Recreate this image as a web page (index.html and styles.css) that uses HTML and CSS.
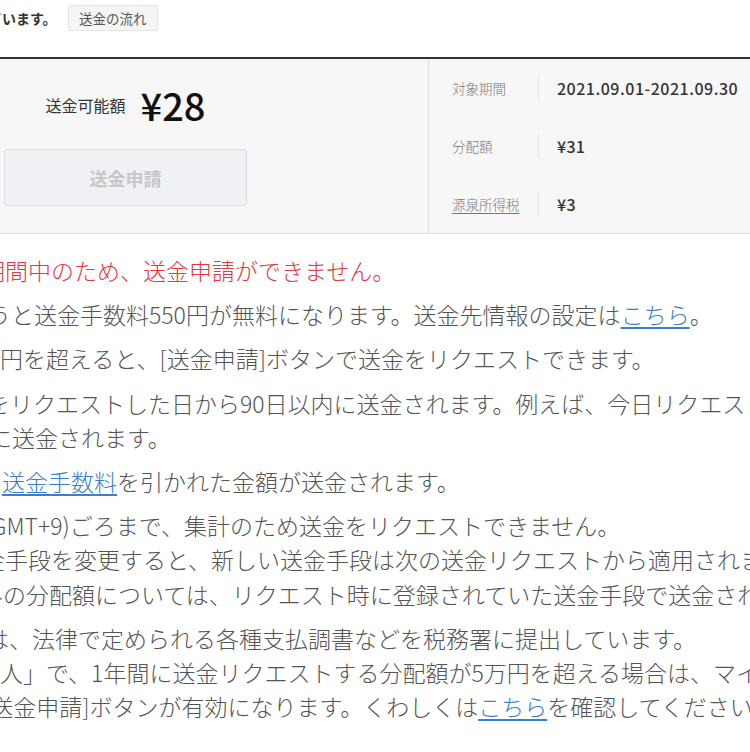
FILE: index.html
```
<!DOCTYPE html>
<html lang="ja">
<head>
<meta charset="utf-8">
<title>送金</title>
<link rel="stylesheet" href="styles.css">
</head>
<body>
<div class="top">
  <span class="lead">ています。</span>
  <span class="flow-btn">送金の流れ</span>
</div>
<div class="rule"></div>
<section class="panel">
  <div class="left">
    <div class="left-inner">
      <div class="avail">
        <span class="avail-label">送金可能額</span>
        <span class="avail-amount">¥28</span>
      </div>
      <button class="req-btn" disabled>送金申請</button>
    </div>
  </div>
  <div class="right">
    <div class="info-row">
      <span class="info-label">対象期間</span>
      <span class="sep"></span>
      <span class="info-value period">2021.09.01-2021.09.30</span>
    </div>
    <div class="info-row">
      <span class="info-label">分配額</span>
      <span class="sep"></span>
      <span class="info-value">¥31</span>
    </div>
    <div class="info-row">
      <span class="info-label"><a class="tax" href="#">源泉所得税</a></span>
      <span class="sep"></span>
      <span class="info-value">¥3</span>
    </div>
  </div>
</section>
<main class="notes">
  <p class="para warn"><span class="ln i-18">期間中のため、送金申請ができません。</span></p>
  <p class="para"><span class="ln i-12">うと送金手数料550円が無料になります。送金先情報の設定は<a href="#">こちら</a>。</span></p>
  <p class="para"><span class="ln i0">円を超えると、[送金申請]ボタンで送金をリクエストできます。</span></p>
  <p class="para">
    <span class="ln i-13">をリクエストした日から90日以内に送金されます。例えば、今日リクエストした場合</span>
    <span class="ln i-11">に送金されます。</span>
  </p>
  <p class="para"><span class="ln i2"><a href="#">送金手数料</a>を引かれた金額が送金されます。</span></p>
  <p class="para">
    <span class="ln i-9">GMT+9)ごろまで、集計のため送金をリクエストできません。</span>
    <span class="ln i-18">金手段を変更すると、新しい送金手段は次の送金リクエストから適用されます。</span>
    <span class="ln i-20">みの分配額については、リクエスト時に登録されていた送金手段で送金されます。</span>
  </p>
  <p class="para">
    <span class="ln i-14">は、法律で定められる各種支払調書などを税務署に提出しています。</span>
    <span class="ln i-23">個人」で、1年間に送金リクエストする分配額が5万円を超える場合は、マイナンバー</span>
    <span class="ln i-17">[送金申請]ボタンが有効になります。くわしくは<a href="#">こちら</a>を確認してください。</span>
  </p>
</main>
</body>
</html>
```
FILE: styles.css
```
html, body {
  margin: 0;
  padding: 0;
  overflow: hidden;
  background: #ffffff;
}
body {
  width: 750px;
  height: 752px;
  font-family: "Noto Sans CJK JP", "Noto Sans", sans-serif;
  color: #333;
}
a {
  color: #3a7fc8;
  text-decoration: underline;
  text-underline-offset: 3px;
}

.top {
  height: 57px;
  display: flex;
  align-items: flex-start;
  padding-top: 5px;
  box-sizing: border-box;
}
.lead {
  display: block;
  white-space: nowrap;
  font-size: 14px;
  font-weight: 700;
  line-height: 26px;
  color: #333;
  text-indent: -12px;
  width: 58px;
}
.flow-btn {
  margin-left: 10px;
  height: 26px;
  box-sizing: border-box;
  padding: 0 10px;
  border: 1px solid #e6e6e6;
  border-radius: 2px;
  background: #f5f5f5;
  font-size: 13.5px;
  line-height: 24px;
  color: #555;
}
.rule {
  height: 2px;
  background: #2c3340;
}

.panel {
  display: flex;
  height: 175px;
  box-sizing: border-box;
  background: #f7f7f7;
  border-bottom: 1px solid #dedede;
}
.left {
  width: 429px;
  box-sizing: border-box;
  border-right: 1px solid #dedede;
  padding-left: 4px;
}
.left-inner {
  width: 243px;
  padding-top: 21px;
}
.avail {
  height: 50px;
  display: flex;
  align-items: center;
  justify-content: center;
  gap: 15px;
}
.avail-label {
  font-size: 16px;
  color: #333;
}
.avail-amount {
  font-size: 38px;
  font-weight: 500;
  color: #111;
  line-height: 1;
}
.req-btn {
  display: block;
  margin-top: 19px;
  width: 243px;
  height: 57px;
  border: 1px solid #dcdde1;
  border-radius: 3px;
  background: #f0f1f4;
  font-family: "Noto Sans CJK JP", sans-serif;
  font-size: 18px;
  font-weight: 700;
  color: #c6c7ca;
  padding: 0;
}

.right {
  flex: 1;
  padding-left: 23px;
}
.info-row {
  height: 58px;
  display: flex;
  align-items: center;
}
.info-label {
  width: 86px;
  font-size: 13.5px;
  font-weight: 300;
  color: #777;
}
.tax {
  color: #777;
  text-underline-offset: 3px;
}
.sep {
  width: 1px;
  height: 24px;
  background: #e4e4e4;
}
.info-value {
  margin-left: 18px;
  font-size: 16px;
  font-weight: 500;
  color: #333;
  letter-spacing: 0.3px;
}
.period {
  letter-spacing: 0.5px;
}

.notes {
  padding-top: 19px;
}
.para {
  margin: 0 0 10px 0;
  font-size: 23px;
  font-weight: 300;
  line-height: 34.2px;
  color: #555;
}
.warn {
  color: #e03a3e;
}
.ln {
  display: block;
  white-space: nowrap;
}
.i0 { text-indent: 0; }
.i2 { text-indent: 2px; }
.i-9 { text-indent: -9px; }
.i-11 { text-indent: -11px; }
.i-12 { text-indent: -12px; }
.i-13 { text-indent: -13px; }
.i-14 { text-indent: -14px; }
.i-17 { text-indent: -17px; }
.i-18 { text-indent: -18px; }
.i-20 { text-indent: -20px; }
.i-23 { text-indent: -23px; }
```
